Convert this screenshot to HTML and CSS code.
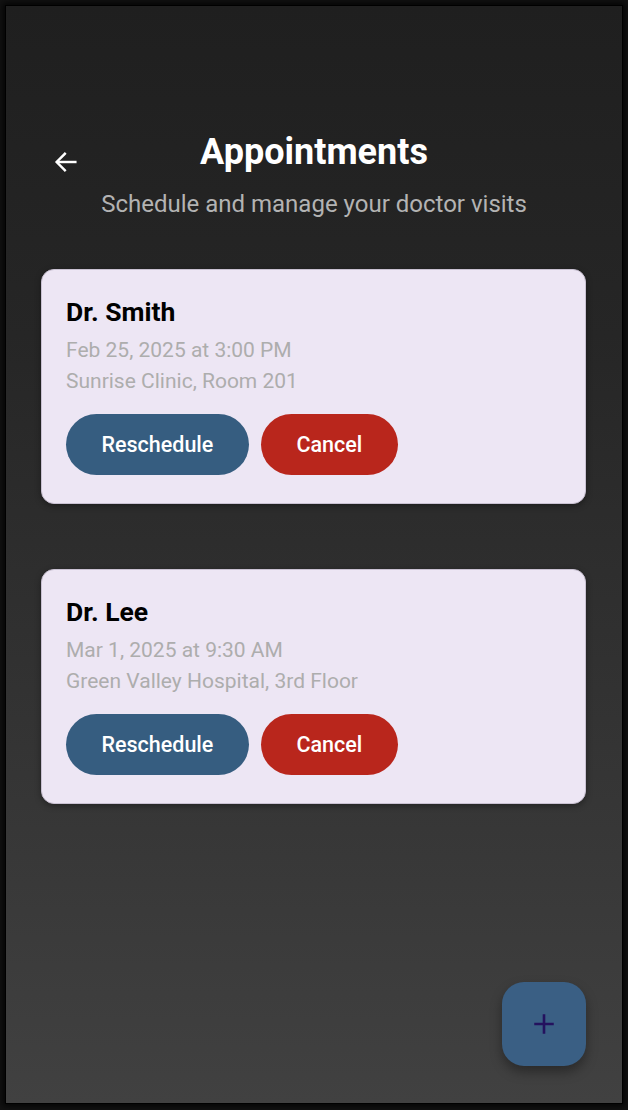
FILE: index.html
```html
<!DOCTYPE html>
<html lang="en">
<head>
<meta charset="utf-8">
<title>Appointments</title>
<link rel="stylesheet" href="styles.css">
</head>
<body>
<div class="screen">
  <header class="header">
    <button class="back" aria-label="Back">
      <svg width="28" height="28" viewBox="0 0 24 24" fill="none" stroke="#fff" stroke-width="2.1" stroke-linecap="square"><path d="M20 12H5"/><path d="M11 5l-7 7 7 7"/></svg>
    </button>
    <h1 class="title">Appointments</h1>
    <p class="subtitle">Schedule and manage your doctor visits</p>
  </header>
  <main class="list">
    <section class="card">
      <h2 class="doc">Dr. Smith</h2>
      <p class="meta">Feb 25, 2025 at 3:00 PM</p>
      <p class="meta">Sunrise Clinic, Room 201</p>
      <div class="actions">
        <button class="btn btn-blue">Reschedule</button>
        <button class="btn btn-red">Cancel</button>
      </div>
    </section>
    <section class="card">
      <h2 class="doc">Dr. Lee</h2>
      <p class="meta">Mar 1, 2025 at 9:30 AM</p>
      <p class="meta">Green Valley Hospital, 3rd Floor</p>
      <div class="actions">
        <button class="btn btn-blue">Reschedule</button>
        <button class="btn btn-red">Cancel</button>
      </div>
    </section>
  </main>
  <button class="fab" aria-label="Add">
    <svg width="26" height="26" viewBox="0 0 24 24" fill="none" stroke="#24125e" stroke-width="2.4"><path d="M12 3v18M3 12h18"/></svg>
  </button>
</div>
</body>
</html>
```
FILE: styles.css
```css
* { box-sizing: border-box; }
html, body { margin: 0; padding: 0; }
body {
  background: #121212;
  width: 628px;
  height: 1110px;
  padding: 5px;
  font-family: Roboto, "Liberation Sans", sans-serif;
}
.screen {
  position: relative;
  width: 618px;
  height: 1099px;
  border: 1px solid #000;
  background: linear-gradient(180deg, #1f1f1f 0%, #262626 30%, #333333 65%, #414141 100%);
  box-shadow: 0 0 6px 2px rgba(0,0,0,0.8);
  display: flex;
  flex-direction: column;
}
.header {
  position: relative;
  padding-top: 123px;
  text-align: center;
}
.back {
  position: absolute;
  left: 46px;
  top: 142px;
  background: none;
  border: 0;
  padding: 0;
  width: 28px;
  height: 28px;
}
.title {
  margin: 0;
  color: #fff;
  font-size: 36px;
  font-weight: 700;
  line-height: 46px;
}
.subtitle {
  margin: 14px 0 0;
  color: #b3b3b3;
  font-size: 24px;
  line-height: 30px;
}
.list {
  padding: 50px 36px 0 35px;
  display: flex;
  flex-direction: column;
  gap: 65px;
}
.card {
  background: #ede6f4;
  border: 1px solid #c9c1d2;
  border-radius: 13px;
  padding: 28px 24px 28px;
  box-shadow: 0 2px 6px rgba(0,0,0,0.35);
}
.doc {
  margin: 0;
  font-size: 26.5px;
  font-weight: 700;
  line-height: 28px;
  color: #000;
}
.meta {
  margin: 0;
  font-size: 21px;
  line-height: 31px;
  color: #adadad;
}
.doc + .meta { margin-top: 9px; }
.actions {
  display: flex;
  gap: 12px;
  margin-top: 17px;
}
.btn {
  height: 61px;
  border: 0;
  border-radius: 31px;
  color: #fff;
  font-family: Roboto, "Liberation Sans", sans-serif;
  font-size: 21.5px;
  font-weight: 500;
  padding: 0 35.5px;
}
.btn-blue { background: #365d80; }
.btn-red { background: #b9261c; }
.fab {
  position: absolute;
  right: 36px;
  bottom: 37px;
  width: 84px;
  height: 84px;
  border: 0;
  border-radius: 22px;
  background: #3a5f84;
  box-shadow: 0 6px 12px rgba(0,0,0,0.35);
  display: flex;
  align-items: center;
  justify-content: center;
}
```
